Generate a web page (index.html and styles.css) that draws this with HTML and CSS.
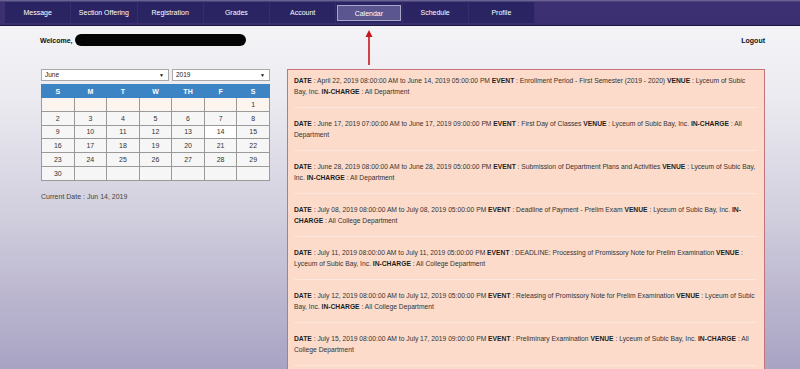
FILE: index.html
```html
<!DOCTYPE html>
<html>
<head>
<meta charset="utf-8">
<title>Calendar</title>
<link rel="stylesheet" href="styles.css">
</head>
<body>
<div class="page">
  <nav class="topbar">
    <ul class="menu">
      <li class="menu-item">Message</li>
      <li class="menu-item">Section Offering</li>
      <li class="menu-item">Registration</li>
      <li class="menu-item">Grades</li>
      <li class="menu-item">Account</li>
      <li class="menu-item active"><span class="active-box">Calendar</span></li>
      <li class="menu-item">Schedule</li>
      <li class="menu-item">Profile</li>
    </ul>
  </nav>

  <div class="userbar">
    <div class="welcome"><b>Welcome,</b> <span class="redacted"></span></div>
    <div class="logout">Logout</div>
  </div>

  <svg class="arrow" width="10" height="36" viewBox="0 0 10 36">
    <line x1="5" y1="5" x2="5" y2="35" stroke="#c8161d" stroke-width="1.6"/>
    <polygon points="5,0 8.5,7 1.5,7" fill="#c8161d"/>
  </svg>

  <main class="content">
    <section class="cal">
      <div class="selects">
        <div class="select month">June<span class="caret">▼</span></div>
        <div class="select year">2019<span class="caret">▼</span></div>
      </div>
      <table class="cal-table">
        <thead>
          <tr><th>S</th><th>M</th><th>T</th><th>W</th><th>TH</th><th>F</th><th>S</th></tr>
        </thead>
        <tbody>
          <tr class="first"><td></td><td></td><td></td><td></td><td></td><td></td><td>1</td></tr>
          <tr><td>2</td><td>3</td><td>4</td><td>5</td><td>6</td><td>7</td><td>8</td></tr>
          <tr><td>9</td><td>10</td><td>11</td><td>12</td><td>13</td><td class="today">14</td><td>15</td></tr>
          <tr><td>16</td><td>17</td><td>18</td><td>19</td><td>20</td><td>21</td><td>22</td></tr>
          <tr><td>23</td><td>24</td><td>25</td><td>26</td><td>27</td><td>28</td><td>29</td></tr>
          <tr><td>30</td><td></td><td></td><td></td><td></td><td></td><td></td></tr>
        </tbody>
      </table>
      <p class="current">Current Date : Jun 14, 2019</p>
    </section>

    <section class="events">
      <div class="event"><b>DATE</b> : April 22, 2019 08:00:00 AM to June 14, 2019 05:00:00 PM <b>EVENT</b> : Enrollment Period - First Semester (2019 - 2020) <b>VENUE</b> : Lyceum of Subic Bay, Inc. <b>IN-CHARGE</b> : All Department</div>
      <div class="event"><b>DATE</b> : June 17, 2019 07:00:00 AM to June 17, 2019 09:00:00 PM <b>EVENT</b> : First Day of Classes <b>VENUE</b> : Lyceum of Subic Bay, Inc. <b>IN-CHARGE</b> : All Department</div>
      <div class="event"><b>DATE</b> : June 28, 2019 08:00:00 AM to June 28, 2019 05:00:00 PM <b>EVENT</b> : Submission of Department Plans and Activities <b>VENUE</b> : Lyceum of Subic Bay, Inc. <b>IN-CHARGE</b> : All Department</div>
      <div class="event"><b>DATE</b> : July 08, 2019 08:00:00 AM to July 08, 2019 05:00:00 PM <b>EVENT</b> : Deadline of Payment - Prelim Exam <b>VENUE</b> : Lyceum of Subic Bay, Inc. <b>IN-CHARGE</b> : All College Department</div>
      <div class="event"><b>DATE</b> : July 11, 2019 08:00:00 AM to July 11, 2019 05:00:00 PM <b>EVENT</b> : DEADLINE: Processing of Promissory Note for Prelim Examination <b>VENUE</b> : Lyceum of Subic Bay, Inc. <b>IN-CHARGE</b> : All College Department</div>
      <div class="event"><b>DATE</b> : July 12, 2019 08:00:00 AM to July 12, 2019 05:00:00 PM <b>EVENT</b> : Releasing of Promissory Note for Prelim Examination <b>VENUE</b> : Lyceum of Subic Bay, Inc. <b>IN-CHARGE</b> : All College Department</div>
      <div class="event"><b>DATE</b> : July 15, 2019 08:00:00 AM to July 17, 2019 09:00:00 PM <b>EVENT</b> : Preliminary Examination <b>VENUE</b> : Lyceum of Subic Bay, Inc. <b>IN-CHARGE</b> : All College Department</div>
    </section>
  </main>
</div>
</body>
</html>
```

FILE: styles.css
```css
* { box-sizing: border-box; }
html, body { margin: 0; padding: 0; }
body {
  font-family: "Liberation Sans", Arial, sans-serif;
  font-size: 7px;
  color: #333;
}
.page {
  position: relative;
  height: 100vh;
  overflow: hidden;
  display: flex;
  flex-direction: column;
  background: linear-gradient(to bottom, #f7f7f9 0px, #ebeaf0 100px, #d0cddd 220px, #bdb8d0 290px, #a8a3c3 369px);
}
.topbar {
  flex: 0 0 26px;
  height: 26px;
  background: linear-gradient(to bottom, #77739a 0px, #3d3174 2px, #3b2f72 24px);
  border-bottom: 1px solid #1b173f;
  padding: 2px 0 0 5px;
}
.menu {
  list-style: none;
  margin: 0;
  padding: 0;
  display: grid;
  grid-template-columns: repeat(8, 66.25px);
  width: 530px;
  height: 21px;
  background: #2b2462;
}
.menu-item {
  display: flex;
  align-items: center;
  justify-content: center;
  color: #fff;
  font-size: 7px;
  border-right: 1px solid #352d6c;
}
.menu-item.active { padding: 0 1px; }
.active-box {
  display: flex;
  align-items: center;
  justify-content: center;
  width: 100%;
  height: 16px;
  margin-top: 1px;
  background: #5b5690;
  border: 1px solid #aaa6c8;
}
.userbar {
  display: flex;
  justify-content: space-between;
  align-items: center;
  padding: 7px 35px 0 40px;
  height: 21px;
}
.welcome { display: flex; align-items: center; color: #111; font-size: 7px; }
.welcome b { margin-right: 2px; }
.redacted {
  display: inline-block;
  width: 171px;
  height: 12px;
  border-radius: 6px;
  background: #050505;
}
.logout { font-weight: bold; color: #111; font-size: 7px; }
.arrow {
  position: absolute;
  left: 364px;
  top: 30px;
}
.content {
  display: flex;
  align-items: flex-start;
  gap: 17px;
  padding: 22px 35px 0 41px;
  flex: 1;
  min-height: 0;
}
.cal { width: 229px; flex: 0 0 229px; }
.selects { display: flex; gap: 3px; height: 12px; margin-bottom: 3px; }
.select {
  position: relative;
  height: 12px;
  background: #fff;
  border: 1px solid #a9a9a9;
  font-size: 6.5px;
  line-height: 10px;
  padding-left: 3px;
  color: #222;
}
.select.month { width: 128px; }
.select.year { width: 98px; }
.caret {
  position: absolute;
  right: 4px;
  top: 0;
  font-size: 5px;
  color: #111;
}
.cal-table {
  width: 229px;
  border-collapse: collapse;
  table-layout: fixed;
}
.cal-table th {
  background: #3d84c5;
  color: #fff;
  font-weight: bold;
  font-size: 7px;
  height: 13px;
  padding: 0;
  border: 1px solid #3d84c5;
}
.cal-table td {
  height: 13.8px;
  padding: 0;
  text-align: center;
  border: 1px solid #9a9a9a;
  background: #f6f6f6;
  color: #333;
  font-size: 7px;
}
.cal-table tr.first td { background: #fbf4ef; }
.cal-table td.today { background: #ffffff; }
.current { margin: 12px 0 0; color: #444; font-size: 7px; }
.events {
  flex: 1;
  align-self: stretch;
  margin-bottom: -200px;
  background: #fcdbcb;
  border: 1px solid #c4737c;
  padding: 5px 7px 0 6px;
}
.event {
  line-height: 11px;
  font-size: 6.73px;
  color: #333;
  padding-bottom: 10px;
  margin-bottom: 10px;
  border-bottom: 1px solid #fde7dd;
}
.event b { color: #1d1d1d; }
```
